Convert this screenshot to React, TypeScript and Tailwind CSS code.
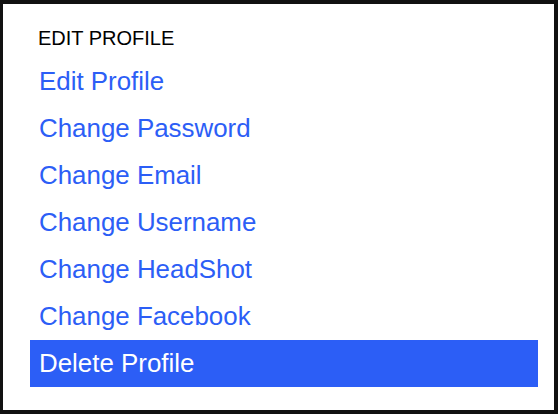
import React from "react";

const items = [
  "Edit Profile",
  "Change Password",
  "Change Email",
  "Change Username",
  "Change HeadShot",
  "Change Facebook",
  "Delete Profile",
];

export default function App() {
  return (
    <div
      className="w-[558px] h-[414px] bg-white border-t-4 border-r-4 border-b-4 border-l-[3px] border-[#111111] pl-[27px] pr-[16px] pt-[23px]"
      style={{ fontFamily: '"Liberation Sans", Arial, Helvetica, sans-serif' }}
    >
      <div className="text-[20px] leading-[23px] text-black pl-[8px] mb-[8px]">EDIT PROFILE</div>
      <ul className="flex flex-col">
        {items.map((label, i) => {
          const active = i === items.length - 1;
          return (
            <li
              key={label}
              className={
                active
                  ? "h-[47px] leading-[47px] text-[25.9px] pl-[9px] bg-[#2c5ef6] text-white"
                  : "h-[47px] leading-[47px] text-[25.9px] pl-[9px] text-[#2c5ef6]"
              }
            >
              {label}
            </li>
          );
        })}
      </ul>
    </div>
  );
}
